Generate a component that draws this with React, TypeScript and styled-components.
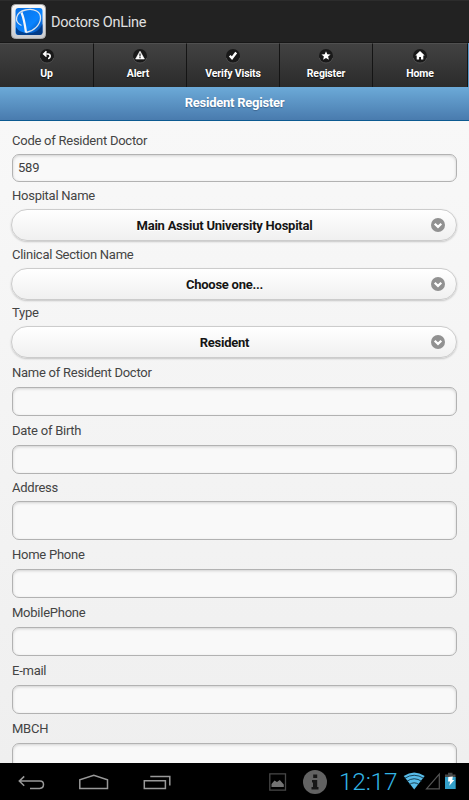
import React from 'react';
import styled, { createGlobalStyle } from 'styled-components';

const GlobalStyle = createGlobalStyle`
  * { box-sizing: border-box; }
  html, body { margin: 0; padding: 0; background: #000; }
  body, input, textarea, button { font-family: Roboto, "Liberation Sans", sans-serif; }
`;

const Screen = styled.div`
  width: 469px;
  height: 800px;
  overflow: hidden;
  display: flex;
  flex-direction: column;
  background: #f3f3f3;
`;

const TitleBar = styled.header`
  flex: 0 0 43px;
  display: flex;
  align-items: center;
  padding: 0 0 0 11px;
  gap: 5px;
  background: #222;
  border-top: 1px solid #2c2c2c;
  border-bottom: 1px solid #171717;
  color: #e0e0e0;
  font-size: 14.5px;
  line-height: 19px;
  letter-spacing: -0.3px;
`;

const AppName = styled.span`
  padding-top: 2px;
`;

const Tabs = styled.nav`
  flex: 0 0 44px;
  display: grid;
  grid-template-columns: 94px 93px 93px 93px 95px;
  background: #5b9bcb;
`;

const Tab = styled.a`
  display: flex;
  flex-direction: column;
  align-items: center;
  padding-top: 4px;
  border-top: 1px solid #505050;
  border-right: 1px solid #141414;
  background: linear-gradient(#424242, #2b2b2b);
  color: #fff;
  font-size: 10.5px;
  letter-spacing: -0.15px;
  font-weight: 700;
  line-height: 12px;
  text-shadow: 0 1px 1px #111;
`;

const TabLabel = styled.span<{ $inset?: number }>`
  padding-right: ${(p) => p.$inset ?? 0}px;
`;

const TabIcon = styled.svg`
  width: 16px;
  height: 16px;
  margin-bottom: 4px;
  display: block;
`;

const PageHeader = styled.h1`
  flex: 0 0 34px;
  margin: 0;
  border-bottom: 1px solid #0c5a91;
  background: linear-gradient(#6caad8, #497bae);
  color: #fff;
  font-size: 13px;
  letter-spacing: -0.24px;
  font-weight: 700;
  line-height: 31px;
  text-align: center;
  text-shadow: 0 1px 1px #3e6790;
`;

const Form = styled.main`
  flex: 1 1 0;
  min-height: 0;
  overflow: hidden;
  padding: 6px 12px 0;
  background: linear-gradient(#f8f8f8, #efefef);
`;

const Label = styled.label<{ $height: number }>`
  display: block;
  height: ${(p) => p.$height}px;
  line-height: ${(p) => p.$height}px;
  color: #444;
  font-size: 13px;
  letter-spacing: -0.25px;
`;

const Input = styled.input<{ $height: number }>`
  display: block;
  width: 445px;
  height: ${(p) => p.$height}px;
  padding: 0 5px 2px;
  border: 1px solid #b2b2b2;
  border-radius: 7px;
  outline: none;
  background: #f9f9f9;
  box-shadow: inset 0 1px 3px rgba(0, 0, 0, 0.16);
  color: #404040;
  font-size: 13px;
  letter-spacing: -0.2px;
`;

const Select = styled.button`
  display: grid;
  grid-template-columns: 1fr 14px;
  align-items: center;
  width: 446px;
  height: 32px;
  padding: 0 11px 0 0;
  margin: 0 0 0 -1px;
  border: 1px solid #ccc;
  border-radius: 16px;
  background: linear-gradient(#fff, #f0f0f0);
  box-shadow: 0 1px 2px rgba(0, 0, 0, 0.2);
  color: #151515;
  font-size: 13px;
  letter-spacing: -0.24px;
  font-weight: 700;
  text-shadow: 0 1px 0 #fff;
`;

const SelectText = styled.span`
  padding-left: 6px;
`;

const SystemBar = styled.footer`
  flex: 0 0 37px;
  display: flex;
  justify-content: space-between;
  background: #000;
`;

const Drawing = styled.svg`
  display: block;
  flex: none;
`;

const Status = styled.div`
  display: flex;
  align-items: center;
`;

const Clock = styled.time`
  width: 63px;
  margin-left: 12px;
  color: #33b5e5;
  font-size: 24.5px;
  letter-spacing: -0.25px;
  font-weight: 300;
  line-height: 37px;
  white-space: nowrap;
`;

const tabs = [
  {
    label: 'Up',
    icon: <path d="M5.2 6h3.6a2.2 2.2 0 0 1 .2 4.5M7.5 3.4 4.8 6l2.7 2.5" fill="none" stroke="#fff" strokeWidth="1.7" />,
  },
  {
    label: 'Alert',
    inset: 4,
    icon: (
      <>
        <path d="M8 3.2 12.4 11H3.6z" fill="#fff" stroke="#fff" strokeLinejoin="round" strokeWidth=".6" />
        <path d="M8 5.4v3M8 9.1v1.1" stroke="#222" strokeWidth="1.2" />
      </>
    ),
  },
  { label: 'Verify Visits', icon: <path d="m4.8 7.8 2.2 2.4 4.2-5.7" fill="none" stroke="#fff" strokeWidth="2.4" /> },
  {
    label: 'Register',
    icon: <path d="m8 3.2 1.3 3 3.3.3-2.5 2.1.8 3.2L8 10.1l-2.9 1.7.8-3.2-2.5-2.1 3.3-.3z" fill="#fff" />,
  },
  { label: 'Home', icon: <path d="m8 3 4.7 4.4h-1.4v4H9V9H7.1v2.4H4.7v-4H3.3z" fill="#fff" /> },
];

type Field = { label: string; labelHeight: number; height: number; kind: 'input' | 'select'; value?: string };

const fields: Field[] = [
  { label: 'Code of Resident Doctor', labelHeight: 27, height: 28, kind: 'input', value: '589' },
  { label: 'Hospital Name', labelHeight: 27, height: 32, kind: 'select', value: 'Main Assiut University Hospital' },
  { label: 'Clinical Section Name', labelHeight: 27, height: 32, kind: 'select', value: 'Choose one...' },
  { label: 'Type', labelHeight: 26, height: 32, kind: 'select', value: 'Resident' },
  { label: 'Name of Resident Doctor', labelHeight: 29, height: 29, kind: 'input' },
  { label: 'Date of Birth', labelHeight: 29, height: 29, kind: 'input' },
  { label: 'Address', labelHeight: 27, height: 39, kind: 'input' },
  { label: 'Home Phone', labelHeight: 29, height: 29, kind: 'input' },
  { label: 'MobilePhone', labelHeight: 29, height: 29, kind: 'input' },
  { label: 'E-mail', labelHeight: 29, height: 29, kind: 'input' },
  { label: 'MBCH', labelHeight: 29, height: 29, kind: 'input' },
];

const AppLogo = () => (
  <Drawing width="35" height="35" viewBox="0 0 35 35">
    <defs>
      <linearGradient id="frame" x2="0" y2="1">
        <stop stopColor="#fafafa" />
        <stop offset="1" stopColor="#c9cbd0" />
      </linearGradient>
      <linearGradient id="glass" x2="1" y2="1">
        <stop stopColor="#0870e4" />
        <stop offset=".6" stopColor="#0a84ff" />
        <stop offset="1" stopColor="#003a94" />
      </linearGradient>
    </defs>
    <rect x=".5" y=".5" width="34" height="34" rx="4" fill="url(#frame)" stroke="#aaa" />
    <rect x="4.500" y="4" width="27" height="27" rx="3" fill="url(#glass)" />
    <path d="M5 23v5q0 3 3 3h20q3.500 0 3.500-3V20q-4 9-13 9Q8 29 5 23z" fill="#02377f" opacity=".85" />
    <path d="M10.500 8.500c2.500 6 3.500 12.500 4.500 20" fill="none" stroke="#f4f6fa" strokeWidth="2.200" />
    <path d="M10.500 21.500C2.500 18 4.500 8 14.500 6 23.500 4 30 8 29.500 14.500 29 21 23 27 15 28.500" fill="none" stroke="#dce4ee" strokeWidth="1.300" />
  </Drawing>
);

const ArrowIcon = () => (
  <Drawing width="14" height="14" viewBox="0 0 14 14">
    <circle cx="7" cy="7" r="7" fill="#919191" />
    <path d="m3.700 5.700 3.300 3.200 3.300-3.200" fill="none" stroke="#fff" strokeWidth="2.200" />
  </Drawing>
);

const NavigationIcons = () => (
  <Drawing width="200" height="37" viewBox="0 0 200 37" fill="none" stroke="#999" strokeWidth="1.500">
    <path d="m24.200 13.400-4.900 4.700 4.900 4.700M19.500 18.100H40q3.500 0 3.500 3.500 0 3.800-3.800 3.800H30" />
    <path d="M79.800 25.500v-8.700l14-4.500 13.700 4.500v8.700z" />
    <path d="M144.300 17.700h21.100v7.700h-21.100zM150.300 13.600h19.500v8.800" />
  </Drawing>
);

const NoticeIcons = () => (
  <Drawing width="58" height="37" viewBox="269 763 58 37">
    <path d="M269.800 773.800h15.700v16.300h-15.700z" fill="none" stroke="#484848" strokeWidth="1.300" />
    <path d="M271.500 787v-3l3-3.500 2.500 1.500 2.800-2 4 4.500v2.500z" fill="#747474" />
    <circle cx="315" cy="782" r="12" fill="#626262" />
    <path d="M313.200 774.500h4v3.500h-4zM312 780h5.200v7h1.300v2.500h-7V787h1.500v-4.500h-1z" fill="#161616" />
  </Drawing>
);

const ConnectionIcons = () => (
  <Drawing width="67" height="37" viewBox="402 763 67 37">
    <path d="M403.700 776q10.500-7 21 0L414.200 789.500z" fill="#58bce9" />
    <path d="M404.500 778.400q9.700-6.300 19.400 0M406.500 781.500q7.700-5.500 15.400 0M409 784.800q5.200-4 10.400 0" fill="none" stroke="#08202c" strokeWidth=".8" />
    <path d="M439.300 774v14.800h-12.800z" fill="none" stroke="#555" strokeWidth="1.200" />
    <path d="M445 774.500h3v-1.700h4.500v1.700h3v3H445z" fill="#484848" />
    <path d="M445 777h10.700v12H445z" fill="#329fc9" />
    <path d="m448.300 777 4.500-.5-.5 3.500h2l-5 5.700.8-4.200h-2z" fill="#fff" />
  </Drawing>
);

export default function App() {
  return (
    <>
      <GlobalStyle />
      <Screen>
        <TitleBar>
          <AppLogo />
          <AppName>Doctors OnLine</AppName>
        </TitleBar>
        <Tabs>
          {tabs.map((tab) => (
            <Tab key={tab.label}>
              <TabIcon viewBox="0 0 16 16">
                <circle cx="8" cy="8" r="7" fill="#191919" />
                <path d="M1.300 10a7 7 0 0 0 13.400 0" fill="none" stroke="#555" strokeWidth=".8" />
                {tab.icon}
              </TabIcon>
              <TabLabel $inset={tab.inset}>{tab.label}</TabLabel>
            </Tab>
          ))}
        </Tabs>
        <PageHeader>Resident Register</PageHeader>
        <Form>
          {fields.map((field) => (
            <React.Fragment key={field.label}>
              <Label $height={field.labelHeight}>{field.label}</Label>
              {field.kind === 'select' ? (
                <Select type="button">
                  <SelectText>{field.value}</SelectText>
                  <ArrowIcon />
                </Select>
              ) : (
                <Input aria-label={field.label} $height={field.height} defaultValue={field.value} />
              )}
            </React.Fragment>
          ))}
        </Form>
        <SystemBar>
          <NavigationIcons />
          <Status>
            <NoticeIcons />
            <Clock>12:17</Clock>
            <ConnectionIcons />
          </Status>
        </SystemBar>
      </Screen>
    </>
  );
}
